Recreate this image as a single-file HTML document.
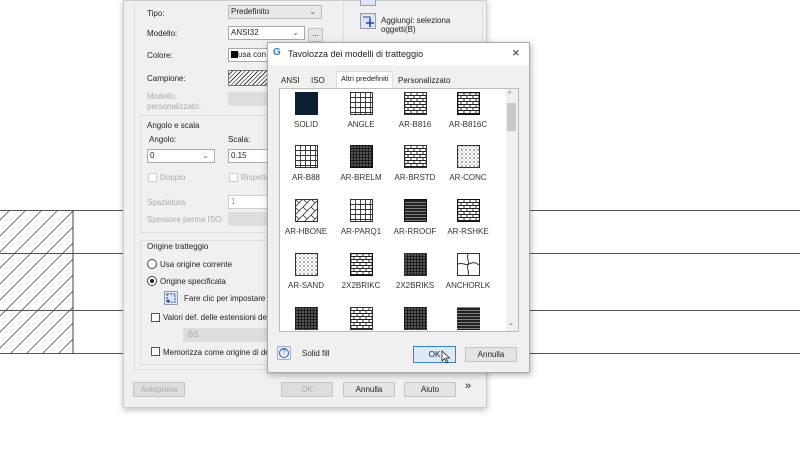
<!DOCTYPE html>
<html><head><meta charset="utf-8"><style>
*{margin:0;padding:0;box-sizing:border-box}
body{width:800px;height:450px;overflow:hidden;background:#fff;font-family:"Liberation Sans",sans-serif;font-size:8px;color:#222;position:relative}
.a{position:absolute}
.hl{position:absolute;height:1px;background:#555}
.btn{position:absolute;background:#e4e4e4;border:1px solid #c4c4c4;text-align:center;line-height:14px;font-size:8px}
.cb{position:absolute;width:9px;height:9px;border:1px solid #555;background:#fff}
.lbl{position:absolute;font-size:8px;color:#222;white-space:nowrap}
.dis{color:#aaa}
.in{position:absolute;background:#fff;border:1px solid #aaa;height:14px;line-height:12px;padding-left:2px;font-size:8px}
.it{position:absolute;width:54px;text-align:center;font-size:8px;color:#333}
.it svg{display:block;margin:0 auto 5px;width:23px;height:23px}
</style></head><body>
<!-- CAD lines -->
<div class="hl" style="left:0;top:210px;width:800px"></div>
<div class="hl" style="left:0;top:253px;width:800px"></div>
<div class="hl" style="left:0;top:310px;width:800px"></div>
<div class="hl" style="left:0;top:353px;width:800px"></div>
<svg class="a" style="left:0;top:210px" width="74" height="144">
<defs><clipPath id="c"><rect x="0" y="0" width="73" height="144"/></clipPath></defs>
<g clip-path="url(#c)" stroke="#555" stroke-width="0.8">
<line x1="-150" y1="144" x2="0" y2="-6"/><line x1="-134" y1="144" x2="16" y2="-6"/><line x1="-118" y1="144" x2="32" y2="-6"/><line x1="-102" y1="144" x2="48" y2="-6"/><line x1="-86" y1="144" x2="64" y2="-6"/><line x1="-70" y1="144" x2="80" y2="-6"/><line x1="-54" y1="144" x2="96" y2="-6"/><line x1="-38" y1="144" x2="112" y2="-6"/><line x1="-22" y1="144" x2="128" y2="-6"/><line x1="-6" y1="144" x2="144" y2="-6"/><line x1="10" y1="144" x2="160" y2="-6"/><line x1="26" y1="144" x2="176" y2="-6"/><line x1="42" y1="144" x2="192" y2="-6"/><line x1="58" y1="144" x2="208" y2="-6"/>
</g>
<line x1="73" y1="0" x2="73" y2="144" stroke="#444" stroke-width="1"/>
</svg>

<!-- main dialog -->
<div class="a" style="left:123px;top:0;width:364px;height:408px;background:#f0f0f0;border:1px solid #ccc;box-shadow:0 2px 6px rgba(0,0,0,.25)"></div>
<div class="a" style="left:134px;top:0;width:210px;height:370px;border:1px solid #ddd;border-top:none"></div>
<div class="a" style="left:343px;top:0;width:140px;height:370px;border:1px solid #ddd;border-top:none"></div>
<div class="a" style="left:140px;top:115px;width:200px;height:118px;border:1px solid #ddd"></div>
<div class="a" style="left:140px;top:240px;width:200px;height:125px;border:1px solid #ddd"></div>

<div class="lbl" style="left:147px;top:9px">Tipo:</div>
<div class="in" style="left:228px;top:5px;width:94px;background:#e8e8e8;border-color:#bbb">Predefinito<span style="position:absolute;right:5px;color:#666">⌄</span></div>
<div class="lbl" style="left:147px;top:29px">Modello:</div>
<div class="in" style="left:228px;top:26px;width:77px">ANSI32<span style="position:absolute;right:5px;color:#666">⌄</span></div>
<div class="btn" style="left:308px;top:28px;width:15px;height:14px;line-height:10px">...</div>
<div class="lbl" style="left:147px;top:51px">Colore:</div>
<div class="in" style="left:228px;top:48px;width:50px"><span style="display:inline-block;width:7px;height:7px;background:#000;vertical-align:-1px"></span>usa con</div>
<div class="lbl" style="left:147px;top:74px">Campione:</div>
<div class="a" style="left:228px;top:70px;width:50px;height:16px;border:1px solid #777;background:repeating-linear-gradient(135deg,#fff 0 2px,#444 2px 3px)"></div>
<div class="lbl dis" style="left:147px;top:92px;line-height:10px">Modello<br>personalizzato:</div>
<div class="a" style="left:228px;top:92px;width:50px;height:14px;background:#ddd"></div>
<div class="lbl" style="left:147px;top:121px">Angolo e scala</div>
<div class="lbl" style="left:149px;top:135px">Angolo:</div>
<div class="lbl" style="left:228px;top:135px">Scala:</div>
<div class="in" style="left:147px;top:149px;width:68px">0<span style="position:absolute;right:5px;color:#666">⌄</span></div>
<div class="in" style="left:228px;top:149px;width:50px">0.15</div>
<div class="cb" style="left:148px;top:173px;border-color:#ccc"></div><div class="lbl dis" style="left:160px;top:173px">Doppio</div>
<div class="cb" style="left:229px;top:173px;border-color:#ccc"></div><div class="lbl dis" style="left:241px;top:173px">Rispetto</div>
<div class="lbl dis" style="left:147px;top:198px">Spaziatura</div>
<div class="in" style="left:228px;top:195px;width:50px;border-color:#ccc;color:#999">1</div>
<div class="lbl dis" style="left:147px;top:215px">Spessore penna ISO:</div>
<div class="a" style="left:228px;top:212px;width:50px;height:14px;background:#ddd"></div>
<div class="lbl" style="left:147px;top:242px">Origine tratteggio</div>
<div class="a" style="left:147px;top:259px;width:10px;height:10px;border:1px solid #444;border-radius:50%;background:#fff"></div>
<div class="lbl" style="left:160px;top:260px">Usa origine corrente</div>
<div class="a" style="left:147px;top:276px;width:10px;height:10px;border:1px solid #444;border-radius:50%;background:#fff"><div style="margin:2px;width:4px;height:4px;border-radius:50%;background:#222"></div></div>
<div class="lbl" style="left:160px;top:277px">Origine specificata</div>
<div class="a" style="left:164px;top:291px;width:14px;height:14px;border:1px solid #99a;background:#dde6f5"><svg width="12" height="12"><rect x="2" y="2" width="8" height="8" fill="none" stroke="#24a" stroke-dasharray="2 1"/><circle cx="3" cy="9" r="1.5" fill="#24a"/></svg></div>
<div class="lbl" style="left:184px;top:294px">Fare clic per impostare nu</div>
<div class="cb" style="left:151px;top:313px"></div><div class="lbl" style="left:163px;top:313px">Valori def. delle estensioni dei c</div>
<div class="a" style="left:183px;top:328px;width:90px;height:14px;background:#ddd;color:#aaa;padding:2px 0 0 5px">BS</div>
<div class="cb" style="left:151px;top:347px"></div><div class="lbl" style="left:163px;top:348px">Memorizza come origine di defa</div>
<div class="btn" style="left:133px;top:382px;width:52px;height:15px;color:#aaa;background:#ddd">Anteprima</div>
<div class="btn" style="left:281px;top:382px;width:52px;height:15px;color:#aaa;background:#ddd">OK</div>
<div class="btn" style="left:343px;top:382px;width:52px;height:15px">Annulla</div>
<div class="btn" style="left:404px;top:382px;width:52px;height:15px">Aiuto</div>
<div class="lbl" style="left:465px;top:380px;font-size:11px">»</div>

<div class="a" style="left:360px;top:0;width:16px;height:6px;border:1px solid #99a;border-top:none;background:#dde6f5"></div>
<div class="a" style="left:360px;top:13px;width:16px;height:16px;border:1px solid #99a;background:#dde6f5"><svg width="14" height="14"><path d="M2 3H9V8" fill="none" stroke="#24a"/><path d="M5 9H13M9 5V13" stroke="#24a" stroke-width="1.6"/></svg></div>
<div class="lbl" style="left:381px;top:16px;line-height:9px">Aggiungi: seleziona<br>oggetti(B)</div>

<!-- hatch palette dialog -->
<div class="a" style="left:267px;top:42px;width:263px;height:331px;background:#f0f0f0;border:1px solid #aaa;box-shadow:1px 2px 6px rgba(0,0,0,.3)"></div>
<div class="a" style="left:268px;top:43px;width:261px;height:22px;background:#fff"></div>
<div class="a" style="left:273px;top:47px;color:#2a7be4;font-weight:bold;font-size:10px">G</div>
<div class="lbl" style="left:288px;top:49px;font-size:9px">Tavolozza dei modelli di tratteggio</div>
<div class="lbl" style="left:512px;top:45px;font-size:13px;color:#333">×</div>
<div class="lbl" style="left:281px;top:76px">ANSI</div>
<div class="lbl" style="left:311px;top:76px">ISO</div>
<div class="a" style="left:336px;top:71px;width:57px;height:18px;background:#fff;border:1px solid #ddd;border-bottom:none"></div>
<div class="lbl" style="left:341px;top:74px;font-size:7.5px">Altri predefiniti</div>
<div class="lbl" style="left:398px;top:76px">Personalizzato</div>
<div class="a" style="left:279px;top:88px;width:240px;height:244px;background:#fff;border:1px solid #bbb"></div>
<div class="a" style="left:506px;top:89px;width:12px;height:242px;background:#f0f0f0"></div>
<div class="a" style="left:507px;top:103px;width:9px;height:28px;background:#c8c8c8"></div>
<div class="lbl" style="left:508px;top:91px;color:#666;font-size:7px">^</div>
<div class="lbl" style="left:508px;top:319px;color:#666;font-size:7px">⌄</div>

<svg width="0" height="0" style="position:absolute">
<defs>
<pattern id="brick" width="6" height="6" patternUnits="userSpaceOnUse"><rect width="6" height="6" fill="#fff"/><path d="M0 .5H6M0 3.5H6M1 0V3M4 3V6" stroke="#222" stroke-width=".9"/></pattern>
<pattern id="grid" width="5" height="5" patternUnits="userSpaceOnUse"><rect width="5" height="5" fill="#fff"/><path d="M0 .5H5M.5 0V5" stroke="#333" stroke-width=".9"/></pattern>
<pattern id="dense" width="3" height="3" patternUnits="userSpaceOnUse"><rect width="3" height="3" fill="#555"/><path d="M0 .5H3M.5 0V3" stroke="#111" stroke-width=".8"/></pattern>
<pattern id="dots" width="4" height="4" patternUnits="userSpaceOnUse"><rect width="4" height="4" fill="#fff"/><circle cx="1" cy="1" r=".7" fill="#333"/><circle cx="3" cy="3" r=".5" fill="#555"/></pattern>
<pattern id="lines" width="4" height="3" patternUnits="userSpaceOnUse"><rect width="4" height="3" fill="#222"/><path d="M0 .5H4" stroke="#ddd" stroke-width=".5"/></pattern>
<pattern id="herring" width="8" height="8" patternUnits="userSpaceOnUse"><rect width="8" height="8" fill="#fff"/><path d="M0 8L8 0M0 0L4 4" stroke="#333" stroke-width=".8"/></pattern>
</defs></svg>

<div class="it" style="left:279px;top:92px"><svg><rect width="23" height="23" fill="#0b2033"/></svg>SOLID</div>
<div class="it" style="left:334px;top:92px"><svg><rect x=".5" y=".5" width="22" height="22" fill="url(#grid)" stroke="#333"/></svg>ANGLE</div>
<div class="it" style="left:388px;top:92px"><svg><rect x=".5" y=".5" width="22" height="22" fill="url(#brick)" stroke="#333"/></svg>AR-B816</div>
<div class="it" style="left:441px;top:92px"><svg><rect x=".5" y=".5" width="22" height="22" fill="url(#brick)" stroke="#111" stroke-width="1.5"/></svg>AR-B816C</div>

<div class="it" style="left:279px;top:145px"><svg><rect x=".5" y=".5" width="22" height="22" fill="url(#grid)" stroke="#333"/></svg>AR-B88</div>
<div class="it" style="left:334px;top:145px"><svg><rect x=".5" y=".5" width="22" height="22" fill="url(#dense)" stroke="#111"/></svg>AR-BRELM</div>
<div class="it" style="left:388px;top:145px"><svg><rect x=".5" y=".5" width="22" height="22" fill="url(#brick)" stroke="#333"/></svg>AR-BRSTD</div>
<div class="it" style="left:441px;top:145px"><svg><rect x=".5" y=".5" width="22" height="22" fill="url(#dots)" stroke="#333"/></svg>AR-CONC</div>

<div class="it" style="left:279px;top:199px"><svg><rect x=".5" y=".5" width="22" height="22" fill="url(#herring)" stroke="#333"/></svg>AR-HBONE</div>
<div class="it" style="left:334px;top:199px"><svg><rect x=".5" y=".5" width="22" height="22" fill="url(#grid)" stroke="#333"/></svg>AR-PARQ1</div>
<div class="it" style="left:388px;top:199px"><svg><rect x=".5" y=".5" width="22" height="22" fill="url(#lines)" stroke="#111"/></svg>AR-RROOF</div>
<div class="it" style="left:441px;top:199px"><svg><rect x=".5" y=".5" width="22" height="22" fill="url(#brick)" stroke="#111"/></svg>AR-RSHKE</div>

<div class="it" style="left:279px;top:253px"><svg><rect x=".5" y=".5" width="22" height="22" fill="url(#dots)" stroke="#333"/></svg>AR-SAND</div>
<div class="it" style="left:334px;top:253px"><svg><rect x=".5" y=".5" width="22" height="22" fill="url(#brick)" stroke="#111" stroke-width="1.3"/></svg>2X2BRIKC</div>
<div class="it" style="left:388px;top:253px"><svg><rect x=".5" y=".5" width="22" height="22" fill="url(#dense)" stroke="#333"/></svg>2X2BRIKS</div>
<div class="it" style="left:441px;top:253px"><svg><rect x=".5" y=".5" width="22" height="22" fill="#fff" stroke="#333"/><path d="M1 11C6 9 8 13 12 11S18 9 22 12M11 1C9 6 13 8 11 12S13 18 11 22" fill="none" stroke="#333"/></svg>ANCHORLK</div>

<div class="a" style="left:280px;top:307px;width:225px;height:24px;overflow:hidden">
<svg class="a" style="left:15px;top:0" width="23" height="23"><rect width="23" height="23" fill="url(#dense)"/></svg>
<svg class="a" style="left:70px;top:0" width="23" height="23"><rect x=".5" y=".5" width="22" height="22" fill="url(#brick)" stroke="#333"/></svg>
<svg class="a" style="left:124px;top:0" width="23" height="23"><rect width="23" height="23" fill="url(#dense)"/></svg>
<svg class="a" style="left:177px;top:0" width="23" height="23"><rect width="23" height="23" fill="url(#lines)"/></svg>
</div>

<div class="a" style="left:277px;top:346px;width:14px;height:14px;border:1px solid #aab;background:#e6ecf5;border-radius:2px"><div style="margin:1px;width:10px;height:10px;border:1px solid #36a;border-radius:50%;font-size:7px;line-height:8px;text-align:center;color:#36a">?</div></div>
<div class="lbl" style="left:302px;top:349px">Solid fill</div>
<div class="btn" style="left:413px;top:346px;width:43px;height:17px;background:#dbe9f8;border:1px solid #3b80d0;line-height:15px">OK</div>
<svg class="a" style="left:441px;top:350px" width="10" height="14"><path d="M1 1V11L3.5 8.5L5.5 13L7 12.3L5 8H8.5Z" fill="#fff" stroke="#222" stroke-width=".8"/></svg>
<div class="btn" style="left:465px;top:347px;width:52px;height:15px">Annulla</div>
</body></html>
